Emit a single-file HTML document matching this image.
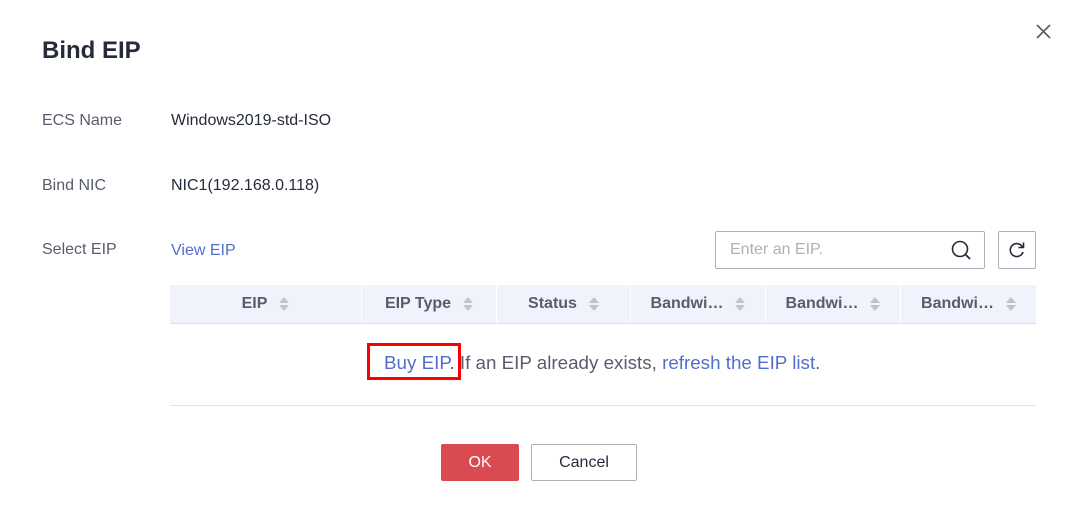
<!DOCTYPE html><html><head><style>
body{margin:0;width:1076px;height:525px;background:#fff;font-family:"Liberation Sans",sans-serif;position:relative;overflow:hidden}
.a{position:absolute;white-space:nowrap}
.lab{color:#575d6c;font-size:16px}
.val{color:#252b3a;font-size:16px}
.th{position:absolute;top:285px;height:38px;background:#f0f3fb;display:flex;align-items:center;justify-content:center;font-weight:bold;color:#575d6c;font-size:16px}
.s{display:inline-block;width:10px;height:15px;margin-left:12px;position:relative}
.s:before,.s:after{content:"";position:absolute;left:0;border-left:5px solid transparent;border-right:5px solid transparent}
.s:before{top:0;border-bottom:6px solid #bfc3cc}
.s:after{top:8px;border-top:6px solid #bfc3cc}
</style></head><body>
<div class="a" style="left:42px;top:37px;font-size:24px;font-weight:bold;color:#252b3a">Bind EIP</div>
<svg class="a" style="left:1036px;top:24px" width="15" height="15"><path d="M1 1L14 14M14 1L1 14" stroke="#575d6c" stroke-width="1.6"/></svg>
<div class="a lab" style="left:42px;top:112px">ECS Name</div>
<div class="a val" style="left:171px;top:112px">Windows2019-std-ISO</div>
<div class="a lab" style="left:42px;top:177px">Bind NIC</div>
<div class="a val" style="left:171px;top:177px">NIC1(192.168.0.118)</div>
<div class="a lab" style="left:42px;top:241px">Select EIP</div>
<div class="a" style="left:171px;top:242px;font-size:16px;color:#526ecc">View EIP</div>
<div class="a" style="left:715px;top:231px;width:268px;height:36px;border:1px solid #adb0b8;border-radius:2px"></div>
<div class="a" style="left:730px;top:241px;font-size:16px;color:#adb0b8">Enter an EIP.</div>
<svg class="a" style="left:950px;top:239px" width="22" height="22"><circle cx="10" cy="10" r="7.5" fill="none" stroke="#252b3a" stroke-width="1.6"/><path d="M15.5 15.5L20 20" stroke="#252b3a" stroke-width="1.8"/></svg>
<div class="a" style="left:998px;top:231px;width:36px;height:36px;border:1px solid #adb0b8;border-radius:2px"></div>
<svg class="a" style="left:1006px;top:239px" width="22" height="22"><path d="M16.5 8A6.5 6.5 0 1 0 17 13" fill="none" stroke="#252b3a" stroke-width="1.6"/><path d="M17.5 3.5V8.5H12.5" fill="none" stroke="#252b3a" stroke-width="1.6"/></svg>
<div class="th" style="left:170px;width:191px">EIP<span class="s"></span></div>
<div class="th" style="left:362px;width:134px">EIP Type<span class="s"></span></div>
<div class="th" style="left:497px;width:133px">Status<span class="s"></span></div>
<div class="th" style="left:631px;width:134px">Bandwi…<span class="s"></span></div>
<div class="th" style="left:766px;width:134px">Bandwi…<span class="s"></span></div>
<div class="th" style="left:901px;width:135px">Bandwi…<span class="s"></span></div>
<div class="a" style="left:170px;top:323px;width:866px;height:1px;background:#dfe1e6"></div>
<div class="a" style="left:384px;top:352px;font-size:18.8px;color:#575d6c"><span style="color:#526ecc">Buy EIP</span>. If an EIP already exists, <span style="color:#526ecc">refresh the EIP list</span>.</div>
<div class="a" style="left:367px;top:343px;width:88px;height:31px;border:3px solid #f00"></div>
<div class="a" style="left:170px;top:405px;width:866px;height:1px;background:#dfe1e6"></div>
<div class="a" style="left:441px;top:444px;width:78px;height:37px;background:#d94a51;border-radius:2px;color:#fff;font-size:16px;text-align:center;line-height:37px">OK</div>
<div class="a" style="left:531px;top:444px;width:104px;height:35px;border:1px solid #adb0b8;border-radius:2px;color:#252b3a;font-size:16px;text-align:center;line-height:35px">Cancel</div>
</body></html>
